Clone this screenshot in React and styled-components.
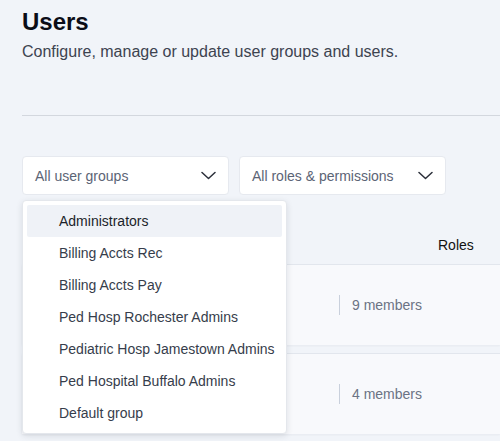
import React from 'react';
import styled, { createGlobalStyle } from 'styled-components';

const Global = createGlobalStyle`
  html, body {
    margin: 0;
    padding: 0;
    background: #f1f4f9;
    font-family: "Liberation Sans", Arial, sans-serif;
    overflow: hidden;
  }
`;

const Page = styled.div`
  width: 500px;
  height: 441px;
  padding: 8px 0 0 22px;
  box-sizing: border-box;
  position: relative;
`;

const Title = styled.h1`
  margin: 0;
  font-size: 24px;
  line-height: 28px;
  font-weight: 700;
  color: #0b0d17;
`;

const Subtitle = styled.p`
  margin: 7px 0 0;
  font-size: 16px;
  line-height: 18px;
  color: #3d4350;
`;

const Divider = styled.hr`
  margin: 54px 0 0;
  border: 0;
  height: 1px;
  background: #d3d7de;
`;

const Filters = styled.div`
  display: flex;
  gap: 10px;
  margin-top: 40px;
  position: relative;
`;

const Select = styled.div`
  width: 207px;
  height: 39px;
  box-sizing: border-box;
  background: #fff;
  border: 1px solid #e6e9ef;
  border-radius: 4px;
  display: flex;
  align-items: center;
  justify-content: space-between;
  padding: 0 12px 0 12px;
  font-size: 14px;
  color: #5b6475;
`;

const Chevron = () => (
  <svg width="15" height="9" viewBox="0 0 15 9" fill="none">
    <path d="M1 1.5l6.5 6 6.5-6" stroke="#2b2f3a" strokeWidth="1.5" strokeLinecap="round" strokeLinejoin="round" />
  </svg>
);

const Menu = styled.ul`
  position: absolute;
  top: 44px;
  left: 0;
  width: 265px;
  margin: 0;
  padding: 4px;
  box-sizing: border-box;
  list-style: none;
  background: #fff;
  border: 1px solid #e4e7ec;
  border-radius: 4px;
  box-shadow: 0 2px 6px rgba(30, 40, 60, 0.12);
  z-index: 2;
`;

const Item = styled.li`
  height: 32px;
  display: flex;
  align-items: center;
  padding-left: 32px;
  border-radius: 2px;
  font-size: 14px;
  color: ${p => (p.$active ? '#1b1f29' : '#363d4b')};
  background: ${p => (p.$active ? '#eff2f7' : 'transparent')};
`;

const Table = styled.div`
  margin-top: 37px;
`;

const HeaderRow = styled.div`
  display: grid;
  grid-template-columns: 317px 99px 1fr;
  height: 32px;
  box-sizing: border-box;
  padding-top: 5px;
  align-items: start;
  font-size: 14px;
  color: #111;
`;

const Row = styled.div`
  display: grid;
  grid-template-columns: 317px 1fr;
  align-items: center;
  height: 81px;
  box-sizing: border-box;
  background: #f8f9fc;
  border-top: 1px solid #e2e6ed;
  box-shadow: 0 1px 2px rgba(30, 40, 60, 0.05);
  margin-bottom: 8px;
`;

const Members = styled.div`
  display: flex;
  align-items: center;
  height: 20px;
  padding-left: 12px;
  border-left: 1px solid #c9d0dc;
  font-size: 14px;
  color: #6b7384;
`;

const groups = [
  'Administrators',
  'Billing Accts Rec',
  'Billing Accts Pay',
  'Ped Hosp Rochester Admins',
  'Pediatric Hosp Jamestown Admins',
  'Ped Hospital Buffalo Admins',
  'Default group',
];

export default function App() {
  return (
    <Page>
      <Global />
      <Title>Users</Title>
      <Subtitle>Configure, manage or update user groups and users.</Subtitle>
      <Divider />
      <Filters>
        <Select>
          All user groups
          <Chevron />
        </Select>
        <Select>
          All roles &amp; permissions
          <Chevron />
        </Select>
        <Menu>
          {groups.map((g, i) => (
            <Item key={g} $active={i === 0}>{g}</Item>
          ))}
        </Menu>
      </Filters>
      <Table>
        <HeaderRow>
          <span />
          <span />
          <span>Roles</span>
        </HeaderRow>
        <Row>
          <span />
          <Members>9 members</Members>
        </Row>
        <Row>
          <span />
          <Members>4 members</Members>
        </Row>
      </Table>
    </Page>
  );
}
